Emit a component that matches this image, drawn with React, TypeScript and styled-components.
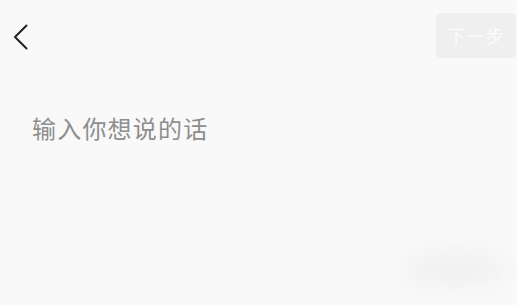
import {FC} from 'react'
import styled, {createGlobalStyle} from 'styled-components'

const GlobalStyle = createGlobalStyle`
  html, body {
    margin: 0;
    padding: 0;
    background: #f9f9f9;
  }

  body {
    font-family: "Noto Sans CJK SC", "Noto Sans", sans-serif;
  }
`

const BackIcon: FC = () => (
   <svg width="16" height="26" viewBox="0 0 16 26" fill="none">
      <path d="M13.5 1.5 L2 13 L13.5 24.5" stroke="#222" strokeWidth="2" strokeLinecap="round" strokeLinejoin="round"/>
   </svg>
)

const App: FC = () => {
   return (
      <>
         <GlobalStyle/>
         <PageStyled>
            <HeaderStyled>
               <BackButtonStyled aria-label="返回">
                  <BackIcon/>
               </BackButtonStyled>
               <NextButtonStyled disabled>下一步</NextButtonStyled>
            </HeaderStyled>
            <MessageInputStyled placeholder="输入你想说的话"/>
            <GlowStyled/>
         </PageStyled>
      </>
   )
}

export default App

const PageStyled = styled.div`
  position: relative;
  width: 517px;
  height: 305px;
  overflow: hidden;
  background: #f9f9f9;
`

const HeaderStyled = styled.div`
  display: flex;
  justify-content: space-between;
  align-items: center;
  padding: 13px 1px 0 13px;
`

const BackButtonStyled = styled.button`
  display: flex;
  align-items: center;
  border: none;
  background: none;
  padding: 0;
  margin-top: 2px;
  cursor: pointer;
`

const NextButtonStyled = styled.button`
  width: 80px;
  height: 45px;
  border: none;
  border-radius: 5px;
  background: #efefef;
  color: #fbfbfb;
  font-family: "Noto Sans CJK SC", sans-serif;
  font-size: 18px;
  letter-spacing: 1px;
  padding: 0 0 2px;
`

const MessageInputStyled = styled.textarea`
  display: block;
  box-sizing: border-box;
  width: 100%;
  height: 120px;
  margin-top: 52px;
  padding: 0 32px;
  border: none;
  outline: none;
  resize: none;
  background: transparent;
  font-family: "Noto Sans CJK SC", sans-serif;
  font-size: 24px;
  letter-spacing: 1.2px;
  line-height: 36px;
  color: #333;

  &::placeholder {
    color: #8e8e8e;
  }
`

const GlowStyled = styled.div`
  position: absolute;
  left: 405px;
  top: 250px;
  width: 100px;
  height: 38px;
  border-radius: 50%;
  background: #f1f1f1;
  filter: blur(10px);
  pointer-events: none;
`
